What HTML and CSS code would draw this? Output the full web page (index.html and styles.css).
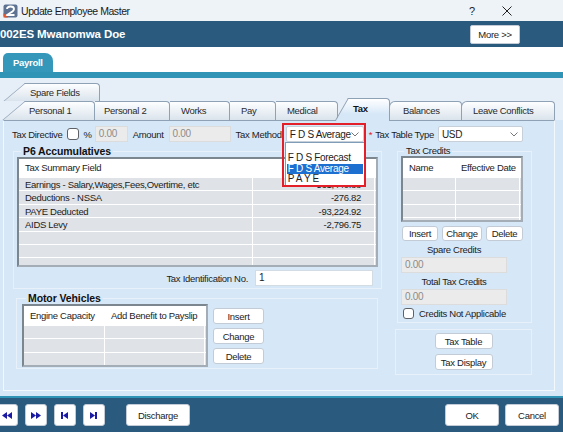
FILE: index.html
```html
<!DOCTYPE html>
<html lang="en">
<head>
    <meta charset="UTF-8">
    <title>Update Employee Master</title>
    <link rel="stylesheet" href="styles.css">
</head>
<body>
<div class="window">
    <!-- Title bar -->
    <div class="titlebar">
        <svg class="app-icon" viewBox="0 0 15 14" width="15" height="14">
            <rect x="0.5" y="0.5" width="14" height="13" rx="2" fill="#5d7391"/>
            <path d="M4 5 Q4 2.5 7.5 2.5 Q11 2.5 11 5 Q11 7 7 9 L4 11 L11.5 11" fill="none" stroke="#fff" stroke-width="1.8"/>
            <path d="M0.5 9 L5 13.5 L0.5 13.5 Z" fill="#e2562c"/>
        </svg>
        <span class="title">Update Employee Master</span>
        <span class="help">?</span>
        <svg class="close" viewBox="0 0 10 10" width="10" height="10">
            <path d="M0.5 0.5 L9.5 9.5 M9.5 0.5 L0.5 9.5" stroke="#222" stroke-width="1"/>
        </svg>
    </div>

    <!-- Employee header -->
    <div class="header">
        <span class="emp-name">002ES Mwanomwa Doe</span>
        <div class="btn more-btn">More &gt;&gt;</div>
    </div>

    <div class="strip">
        <div class="payroll-tab">Payroll</div>
    </div>
    <div class="tealbar"></div>

    <div class="main">
        <div class="tabs">
            <div class="tab-row">
                <div class="tab slant spare">Spare Fields</div>
            </div>
            <div class="tab-row">
                <div class="tab slant personal1">Personal 1</div>
                <div class="tab personal2">Personal 2</div>
                <div class="tab works">Works</div>
                <div class="tab pay">Pay</div>
                <div class="tab medical">Medical</div>
                <div class="tab slant active tax">Tax</div>
                <div class="tab curved balances">Balances</div>
                <div class="tab curved leave">Leave Conflicts</div>
            </div>
        </div>

        <div class="panel">
            <!-- Top row of fields -->
            <div class="top-row">
                <span class="lbl">Tax Directive</span>
                <span class="check directive-check"></span>
                <span class="lbl pct">%</span>
                <div class="input disabled pct-input">0.00</div>
                <span class="lbl amount-lbl">Amount</span>
                <div class="input disabled amount-input">0.00</div>
                <span class="lbl method-lbl">Tax Method</span>
                <div class="method-wrap">
                    <div class="select method-select">
                        <span>F D S Average</span>
                        <svg class="chev" viewBox="0 0 8 5" width="8" height="5"><path d="M0.5 0.5 L4 4 L7.5 0.5" fill="none" stroke="#777" stroke-width="1"/></svg>
                    </div>
                    <div class="dropdown">
                        <div class="opt"></div>
                        <div class="opt">F D S Forecast</div>
                        <div class="opt selected">F D S Average</div>
                        <div class="opt">P A Y E</div>
                    </div>
                    <div class="highlight-box"></div>
                </div>
                <span class="required">*</span>
                <span class="lbl table-type-lbl">Tax Table Type</span>
                <div class="select type-select">
                    <span>USD</span>
                    <svg class="chev" viewBox="0 0 8 5" width="8" height="5"><path d="M0.5 0.5 L4 4 L7.5 0.5" fill="none" stroke="#777" stroke-width="1"/></svg>
                </div>
            </div>

            <div class="columns">
                <div class="col-left">
                    <fieldset class="group p6">
                        <legend class="bold-legend">P6 Accumulatives</legend>
                        <div class="grid p6-grid">
                            <div class="grid-head">
                                <div class="cell c-field">Tax Summary Field</div>
                                <div class="cell c-value"></div>
                                <div class="cell c-stub"></div>
                            </div>
                            <div class="grid-row">
                                <div class="cell c-field">Earnings - Salary,Wages,Fees,Overtime, etc</div>
                                <div class="cell c-value num">-561,440.88</div>
                                <div class="cell c-stub"></div>
                            </div>
                            <div class="grid-row">
                                <div class="cell c-field">Deductions - NSSA</div>
                                <div class="cell c-value num">-276.82</div>
                                <div class="cell c-stub"></div>
                            </div>
                            <div class="grid-row">
                                <div class="cell c-field">PAYE Deducted</div>
                                <div class="cell c-value num">-93,224.92</div>
                                <div class="cell c-stub"></div>
                            </div>
                            <div class="grid-row">
                                <div class="cell c-field">AIDS Levy</div>
                                <div class="cell c-value num">-2,796.75</div>
                                <div class="cell c-stub"></div>
                            </div>
                            <div class="grid-row"><div class="cell c-field"></div><div class="cell c-value"></div><div class="cell c-stub"></div></div>
                            <div class="grid-row"><div class="cell c-field"></div><div class="cell c-value"></div><div class="cell c-stub"></div></div>
                            <div class="grid-row"><div class="cell c-field"></div><div class="cell c-value"></div><div class="cell c-stub"></div></div>
                        </div>
                        <div class="taxid-row">
                            <span class="lbl">Tax Identification No.</span>
                            <div class="input taxid-input">1</div>
                        </div>
                    </fieldset>

                    <fieldset class="group motor">
                        <legend class="bold-legend">Motor Vehicles</legend>
                        <div class="motor-body">
                            <div class="grid motor-grid">
                                <div class="grid-head">
                                    <div class="cell c-engine">Engine Capacity</div>
                                    <div class="cell c-benefit">Add Benefit to Payslip</div>
                                    <div class="cell c-stub"></div>
                                </div>
                                <div class="grid-row"><div class="cell c-engine"></div><div class="cell c-benefit"></div><div class="cell c-stub"></div></div>
                                <div class="grid-row"><div class="cell c-engine"></div><div class="cell c-benefit"></div><div class="cell c-stub"></div></div>
                                <div class="grid-row"><div class="cell c-engine"></div><div class="cell c-benefit"></div><div class="cell c-stub"></div></div>
                            </div>
                            <div class="motor-buttons">
                                <div class="btn">Insert</div>
                                <div class="btn">Change</div>
                                <div class="btn">Delete</div>
                            </div>
                        </div>
                    </fieldset>
                </div>

                <div class="col-right">
                    <fieldset class="group credits">
                        <legend class="plain-legend">Tax Credits</legend>
                        <div class="grid credits-grid">
                            <div class="grid-head">
                                <div class="cell c-name">Name</div>
                                <div class="cell c-date">Effective Date</div>
                                <div class="cell c-stub"></div>
                            </div>
                            <div class="grid-row"><div class="cell c-name"></div><div class="cell c-date"></div><div class="cell c-stub"></div></div>
                            <div class="grid-row"><div class="cell c-name"></div><div class="cell c-date"></div><div class="cell c-stub"></div></div>
                            <div class="grid-row"><div class="cell c-name"></div><div class="cell c-date"></div><div class="cell c-stub"></div></div>
                            <div class="grid-row"><div class="cell c-name"></div><div class="cell c-date"></div><div class="cell c-stub"></div></div>
                        </div>
                        <div class="credit-buttons">
                            <div class="btn b-insert">Insert</div>
                            <div class="btn b-change">Change</div>
                            <div class="btn b-delete">Delete</div>
                        </div>
                        <div class="center-lbl">Spare Credits</div>
                        <div class="input disabled credit-input">0.00</div>
                        <div class="center-lbl">Total Tax Credits</div>
                        <div class="input disabled credit-input">0.00</div>
                        <div class="check-row">
                            <span class="check"></span>
                            <span class="lbl">Credits Not Applicable</span>
                        </div>
                    </fieldset>

                    <fieldset class="group taxtable">
                        <div class="btn wide-btn">Tax Table</div>
                        <div class="btn wide-btn">Tax Display</div>
                    </fieldset>
                </div>
            </div>
        </div>
    </div>

    <div class="footer-line"></div>
    <div class="footer">
        <div class="btn nav-btn first">
            <svg viewBox="0 0 10 7" width="10" height="7"><path d="M0 3.5 L5 0 L5 7 Z M5 3.5 L10 0 L10 7 Z" fill="#1a1aa5"/></svg>
        </div>
        <div class="btn nav-btn">
            <svg viewBox="0 0 10 7" width="10" height="7"><path d="M0 0 L5 3.5 L0 7 Z M5 0 L10 3.5 L5 7 Z" fill="#1a1aa5"/></svg>
        </div>
        <div class="btn nav-btn">
            <svg viewBox="0 0 8 7" width="8" height="7"><path d="M0 0 H2 V7 H0 Z M2 3.5 L7 0 L7 7 Z" fill="#1a1aa5"/></svg>
        </div>
        <div class="btn nav-btn">
            <svg viewBox="0 0 8 7" width="8" height="7"><path d="M0 0 L5 3.5 L0 7 Z M5 0 H7 V7 H5 Z" fill="#1a1aa5"/></svg>
        </div>
        <div class="btn discharge-btn">Discharge</div>
        <div class="spacer"></div>
        <div class="btn footer-btn">OK</div>
        <div class="btn footer-btn cancel-btn">Cancel</div>
    </div>
</div>
</body>
</html>
```

FILE: styles.css
```css
body {
    margin: 0;
    font-family: "Liberation Sans", Arial, sans-serif;
    font-size: 9.5px;
    letter-spacing: -0.3px;
    color: #1c1c1c;
}

.window {
    width: 563px;
    height: 432px;
    overflow: hidden;
    display: flex;
    flex-direction: column;
    background-color: #d6e7f7;
}

/* Title bar */
.titlebar {
    height: 21px;
    flex-shrink: 0;
    background-color: #eef3f8;
    display: flex;
    align-items: center;
    padding-left: 3px;
}

.app-icon {
    margin-right: 3px;
}

.title {
    flex: 1;
    font-size: 10.5px;
    letter-spacing: -0.45px;
    color: #1a1a1a;
}

.help {
    font-size: 11px;
    letter-spacing: 0;
    margin-right: 27px;
}

.close {
    margin-right: 51px;
}

/* Employee header */
.header {
    height: 26px;
    flex-shrink: 0;
    background-color: #2a5a7e;
    display: flex;
    align-items: center;
    justify-content: space-between;
}

.emp-name {
    font-weight: bold;
    font-size: 11.5px;
    letter-spacing: -0.1px;
    color: #fff;
}

.btn {
    display: flex;
    align-items: center;
    justify-content: center;
    box-sizing: border-box;
    background-color: #fff;
    border: 1px solid #c3ccd6;
    border-radius: 3px;
    color: #1c1c1c;
    white-space: nowrap;
}

.more-btn {
    width: 50px;
    height: 19px;
    margin-right: 43px;
    border-radius: 2px;
}

.strip {
    height: 25px;
    flex-shrink: 0;
    background-color: #fff;
    display: flex;
    align-items: flex-end;
    padding-left: 3px;
}

.payroll-tab {
    width: 50px;
    height: 19px;
    box-sizing: border-box;
    padding-left: 10px;
    line-height: 19px;
    background-color: #3598bb;
    border-radius: 5px 8px 0 0;
    color: #fff;
    font-weight: bold;
}

.tealbar {
    height: 6px;
    flex-shrink: 0;
    background-color: #2f94b5;
}

/* Tabs */
.main {
    height: 318px;
    flex-shrink: 0;
}

.tabs {
    height: 42px;
    box-sizing: border-box;
    padding-top: 5px;
    background-color: #e6eff8;
}

.tab-row {
    display: flex;
    align-items: flex-end;
}

.tab-row:first-child {
    height: 18px;
}

.tab-row:last-child {
    height: 19px;
}

.tab {
    position: relative;
    z-index: 1;
    height: 100%;
    box-sizing: border-box;
    padding-left: 11px;
    line-height: 17px;
    white-space: nowrap;
    background: linear-gradient(#fdfeff, #dae3ec);
    border-top: 1px solid #8fa1b4;
    border-right: 1px solid #8fa1b4;
    border-top-right-radius: 4px;
    color: #2a2a2a;
}

.tab.slant {
    padding-left: 4px;
}

.tab.slant::before {
    content: '';
    position: absolute;
    z-index: -1;
    top: -1px;
    bottom: 0;
    left: 0;
    width: 26px;
    background: linear-gradient(#fdfeff, #dae3ec);
    border-left: 1px solid #8fa1b4;
    border-top: 1px solid #8fa1b4;
    transform: skewX(-50deg);
    transform-origin: top left;
}

.tab.curved {
    border-left: 1px solid #8fa1b4;
    border-top-left-radius: 6px;
    margin-left: -1px;
}

.spare { margin-left: 25px; width: 75px; }
.spare.slant { padding-left: 5px; }
.personal1 { margin-left: 25px; width: 70px; }
.personal2 { width: 75px; padding-left: 9px; }
.works { width: 60px; }
.pay { width: 46px; }
.medical { width: 62px; }
.balances { width: 73px; padding-left: 13px; }
.leave { width: 94px; }

.tab.active {
    z-index: 3;
    height: 23px;
    margin-bottom: -1px;
    margin-left: 10px;
    width: 42px;
    padding-left: 5px;
    line-height: 20px;
    font-weight: bold;
    background: linear-gradient(#ffffff, #d6e7f7 70%);
    color: #111;
}

.tab.active::before {
    width: 20px;
    transform: skewX(-30deg);
    background: linear-gradient(#ffffff, #d6e7f7 70%);
}

/* Panel */
.panel {
    position: relative;
    z-index: 2;
    height: 271px;
    box-sizing: border-box;
    margin: 0 8px 0 3px;
    padding: 5px 0 0 8px;
    background-color: #d6e7f7;
    border: 1px solid #f3f8fd;
    border-top-color: #8fa1b4;
}

.top-row {
    display: flex;
    align-items: center;
    height: 16px;
}

.lbl {
    white-space: nowrap;
}

.check {
    display: inline-block;
    width: 12px;
    height: 12px;
    box-sizing: border-box;
    background-color: #fff;
    border: 1px solid #5e6268;
    border-radius: 3px;
}

.directive-check { margin-left: 5px; }
.pct { margin-left: 4px; }

.input {
    height: 16px;
    box-sizing: border-box;
    padding-left: 3px;
    line-height: 14px;
    background-color: #fff;
    border: 1px solid #d3dbe3;
    font-size: 10px;
}

.input.disabled {
    background-color: #ebebeb;
    border-color: #dcdcdc;
    color: #8c8c8c;
}

.pct-input { width: 33px; margin-left: 3px; }
.amount-lbl { margin-left: 5px; }
.amount-input { width: 62px; margin-left: 5px; }
.method-lbl { margin-left: 5px; }

.select {
    height: 16px;
    box-sizing: border-box;
    display: flex;
    align-items: center;
    justify-content: space-between;
    padding: 0 4px 0 3px;
    background-color: #fff;
    border: 1px solid #c7d0d9;
    border-radius: 2px;
    font-size: 10px;
    white-space: nowrap;
}

.method-wrap {
    position: relative;
    margin-left: 4px;
}

.method-select {
    width: 78px;
}

.dropdown {
    position: absolute;
    top: 16px;
    left: -1px;
    width: 80px;
    box-sizing: border-box;
    padding: 0 1px 1px 1px;
    background-color: #fff;
    border: 1px solid #7f9db9;
    font-size: 10px;
}

.opt {
    height: 10.3px;
    line-height: 10px;
    padding-left: 1px;
    white-space: nowrap;
}

.opt.selected {
    background-color: #1d6fd0;
    color: #fff;
}

.highlight-box {
    position: absolute;
    top: -3px;
    left: -4px;
    width: 84px;
    height: 64px;
    box-sizing: border-box;
    border: 2px solid #e3202a;
}

.required {
    color: #e3202a;
    margin-left: 5px;
}

.table-type-lbl { margin-left: 3px; }

.type-select {
    width: 85px;
    margin-left: 4px;
}

/* Columns */
.columns {
    display: flex;
    align-items: flex-start;
    margin-top: 3px;
}

.col-left {
    width: 369px;
    margin-left: 1px;
}

.col-right {
    width: 137px;
    margin-left: 13px;
}

.group {
    margin: 0;
    padding: 0 3px;
    min-width: 0;
    border: 1px solid #e8f1fa;
}

.bold-legend {
    padding: 0 2px;
    margin-left: 4px;
    line-height: 12px;
    font-weight: bold;
    font-size: 10.5px;
    letter-spacing: -0.1px;
    color: #111;
}

.plain-legend {
    padding: 0 2px;
    margin-left: 3px;
    line-height: 10px;
}

/* Data grids */
.grid {
    box-sizing: border-box;
    overflow: hidden;
    background-color: #dfe2e6;
    border: 2px solid;
    border-color: #7c868f #a4adb6 #a4adb6 #7c868f;
}

.grid-head,
.grid-row {
    display: flex;
}

.grid-head {
    height: 19px;
    background-color: #fff;
    border-bottom: 1px solid #fff;
}

.grid-row {
    height: 12.4px;
    border-bottom: 1px solid #fff;
}

.cell {
    flex-shrink: 0;
    box-sizing: border-box;
    padding-left: 6px;
    border-right: 1px solid #fff;
    white-space: nowrap;
    overflow: hidden;
}

.grid-head .cell {
    line-height: 19px;
}

.grid-row .cell {
    line-height: 13px;
}

.c-stub {
    flex: 1;
    border-right: none;
}

.num {
    text-align: right;
    padding-right: 13px;
}

.p6-grid {
    width: 361px;
    height: 110px;
}

.p6-grid .grid-head { height: 18px; }
.p6-grid .grid-head .cell { line-height: 18px; }

.c-field { width: 234px; }
.c-value { width: 122px; }

.taxid-row {
    display: flex;
    align-items: center;
    justify-content: flex-end;
    margin: 3px 5px 2px 0;
}

.taxid-input {
    width: 118px;
    margin-left: 7px;
}

.motor {
    margin: 3px 4px 0 3px;
    padding: 0 0 1px 5px;
}

.motor-body {
    display: flex;
    align-items: flex-start;
}

.motor-grid {
    width: 186px;
    height: 63px;
}

.c-engine { width: 81px; }
.c-benefit { width: 100px; }

.motor-buttons {
    display: flex;
    flex-direction: column;
    gap: 4px;
    margin: 4px 0 0 5px;
}

.motor-buttons .btn {
    width: 51px;
    height: 16px;
}

/* Tax credits */
.credits {
    margin: 1px 0 0 2px;
    padding-bottom: 1px;
}

.credits-grid {
    width: 122px;
    height: 66px;
}

.c-name { width: 53px; }
.c-date { width: 64px; padding-left: 5px; }

.credit-buttons {
    display: flex;
    gap: 4px;
    margin: 4px 0 0 1px;
}

.credit-buttons .btn {
    height: 15px;
}

.b-insert { width: 36px; }
.b-change { width: 40px; }
.b-delete { width: 37px; }

.center-lbl {
    width: 106px;
    height: 12px;
    margin-top: 2px;
    line-height: 13px;
    text-align: center;
}

.credit-input {
    width: 106px;
    margin-top: 2px;
}

.check-row {
    display: flex;
    align-items: center;
    gap: 5px;
    height: 15px;
    margin: 1px 0 0 2px;
}

.check-row .check {
    width: 11px;
    height: 11px;
}

.taxtable {
    margin-top: 6px;
    height: 46px;
    box-sizing: border-box;
    padding: 3px 0 0 0;
    display: flex;
    flex-direction: column;
    align-items: center;
    gap: 5px;
}

.wide-btn {
    width: 58px;
    height: 16px;
}

/* Footer */
.footer-line {
    height: 2px;
    flex-shrink: 0;
    background-color: #2f94b5;
}

.footer {
    flex: 1;
    display: flex;
    align-items: center;
    background-color: #2a5a7e;
}

.nav-btn {
    width: 22px;
    height: 22px;
    margin-left: 7px;
}

.nav-btn.first {
    margin-left: -4px;
}

.discharge-btn {
    width: 64px;
    height: 22px;
    margin-left: 21px;
}

.spacer {
    flex: 1;
}

.footer-btn {
    width: 54px;
    height: 22px;
}

.cancel-btn {
    margin-left: 6px;
    margin-right: 4px;
}
```
